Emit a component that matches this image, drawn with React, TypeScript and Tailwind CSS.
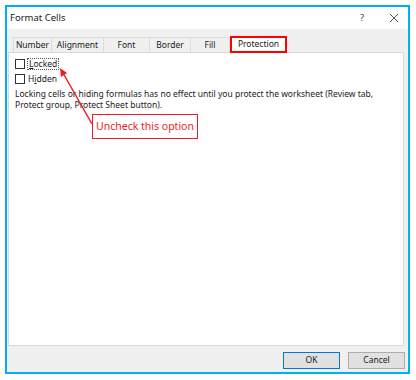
import React from "react";

const font = { fontFamily: '"Noto Sans", "Open Sans", sans-serif' };

function Tab({ label, w, selected }: { label: string; w: number; selected?: boolean }) {
  return (
    <div
      style={{ width: w }}
      className={
        selected
          ? "h-[17px] -mt-[2px] flex items-center justify-center bg-white border-2 border-[#ff0000] text-[8.5px] text-[#1a1a1a] relative z-10 -mb-px"
          : "h-[15px] flex items-center justify-center bg-[#f0f0f0] border border-[#dcdcdc] border-b-0 -ml-px text-[8.5px] text-[#1a1a1a]"
      }
    >
      {label}
    </div>
  );
}

export default function App() {
  return (
    <div className="w-[416px] h-[380px] bg-white pt-[5px] pl-[5px]" style={font}>
      <div className="relative w-[405px] h-[369px] border-2 border-[#00b0f0] flex flex-col">
        {/* title bar */}
        <div className="h-[22px] bg-white flex items-center pl-[3px] pr-[9px]">
          <span className="text-[9.5px] text-[#1a1a1a] flex-1">Format Cells</span>
          <span className="text-[9.5px] text-[#444] mr-[25px]">?</span>
          <svg width="10" height="10" viewBox="0 0 10 10">
            <path d="M1 1 L9 9 M9 1 L1 9" stroke="#555" strokeWidth="1" />
          </svg>
        </div>
        {/* gray body */}
        <div className="flex-1 bg-[#f0f0f0] flex flex-col">
          <div className="flex pl-[7px] mt-[8px] items-end">
            <Tab label="Number" w={39} />
            <Tab label="Alignment" w={53} />
            <Tab label="Font" w={47} />
            <Tab label="Border" w={42} />
            <Tab label="Fill" w={40} />
            <Tab label="Protection" w={57} selected />
          </div>
          <div className="ml-[1px] mr-[4px] h-[294px] bg-white border border-[#d9d9d9] pl-[6px] pt-[5px] text-[8.5px] text-[#1a1a1a]">
            <div className="flex items-center h-[12px]">
              <div className="w-[10px] h-[10px] border border-[#333] bg-white" />
              <span className="ml-[2px] px-[1px] border border-dotted border-[#555] leading-[10px]">
                <span className="underline">L</span>ocked
              </span>
            </div>
            <div className="flex items-center h-[12px] mt-[3px]">
              <div className="w-[10px] h-[10px] border border-[#333] bg-white" />
              <span className="ml-[3px] leading-[10px]">
                H<span className="underline">i</span>dden
              </span>
            </div>
            <div className="mt-[4px] leading-[10.5px] whitespace-nowrap">
              Locking cells or hiding formulas has no effect until you protect the worksheet (Review tab,
              <br />
              Protect group, Protect Sheet button).
            </div>
          </div>
          <div className="flex-1 flex justify-end items-start pt-[6px] pr-[3px] gap-[8px]">
            <div className="w-[57px] h-[17px] bg-[#e1e1e1] border border-[#0078d7] flex items-center justify-center text-[8.5px] text-[#1a1a1a]">
              OK
            </div>
            <div className="w-[57px] h-[17px] bg-[#e1e1e1] border border-[#adadad] flex items-center justify-center text-[8.5px] text-[#1a1a1a]">
              Cancel
            </div>
          </div>
        </div>

        {/* annotation arrow */}
        <svg className="absolute left-[-7px] top-[-7px] pointer-events-none" width="416" height="380">
          <line x1="92" y1="124" x2="63" y2="73" stroke="#ee1c25" strokeWidth="1.5" />
          <polygon points="60,68 61,77 67,73" fill="#ee1c25" />
        </svg>
        {/* annotation box */}
        <div className="absolute left-[85px] top-[107px] w-[106px] h-[25px] bg-white border border-[#ee1c25] flex items-center justify-center text-[10.5px] text-[#ee1c25]">
          Uncheck this option
        </div>
      </div>
    </div>
  );
}
